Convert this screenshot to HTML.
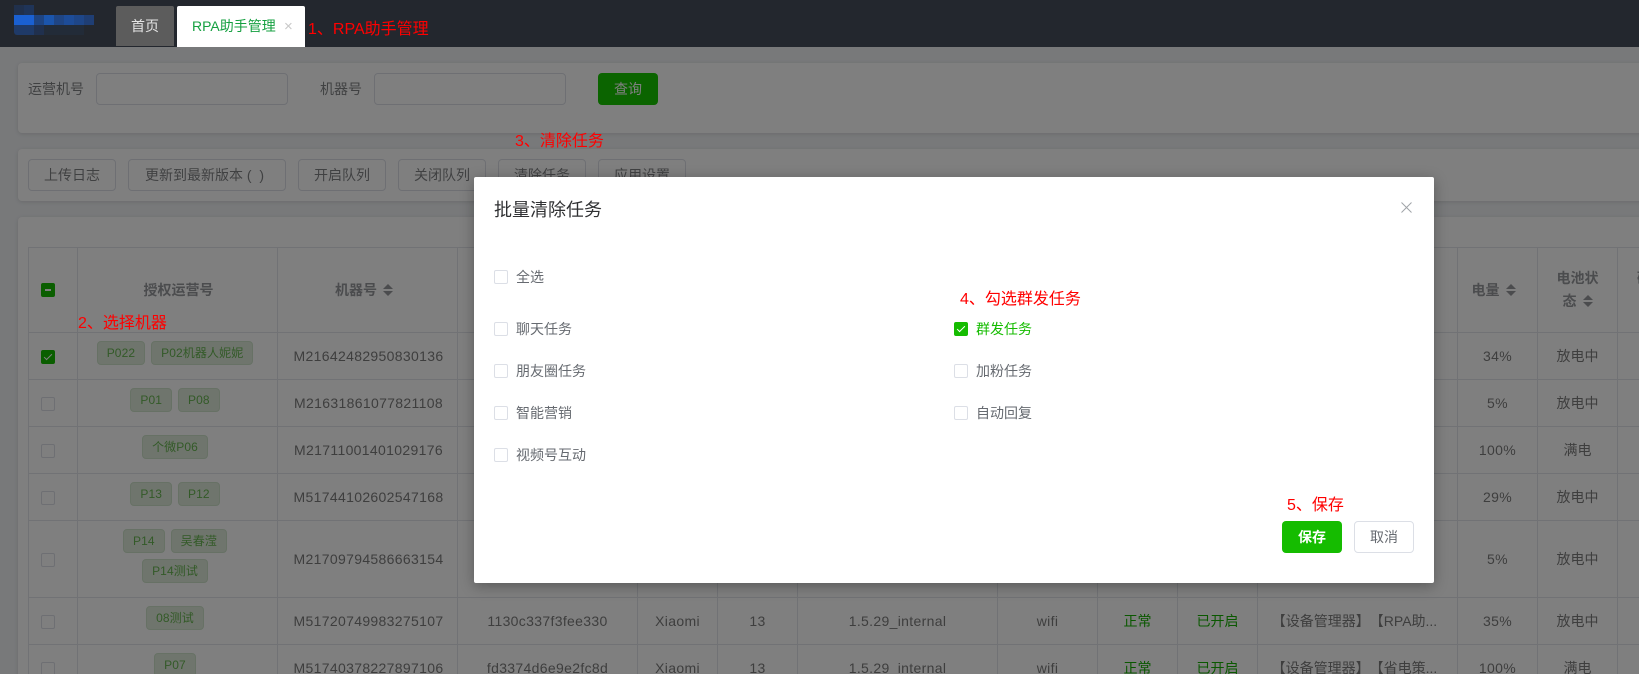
<!DOCTYPE html>
<html lang="zh-CN"><head><meta charset="utf-8"><title>RPA助手管理</title>
<style>
*{box-sizing:border-box}
html,body{margin:0;padding:0;width:1639px;height:674px;overflow:hidden;background:#f0f2f5}
#w{position:absolute;left:0;top:0;width:1639px;height:674px;overflow:hidden;background:#f0f2f5;font-family:"Liberation Sans","Noto Sans CJK SC",sans-serif;font-size:14px;color:#808285;text-spacing-trim:space-all}
.a{position:absolute;white-space:nowrap}
.hd{position:absolute;left:0;top:0;width:1639px;height:47px;background:#23272e;z-index:5}
.px{position:absolute}
.tab{position:absolute;top:6px;height:40px;line-height:41px;border-radius:2px 2px 0 0;text-align:center}
.card{position:absolute;left:18px;width:1640px;background:#fff;border-radius:4px;box-shadow:0 1px 4px rgba(0,0,0,.12)}
.inp{position:absolute;top:73px;width:192px;height:32px;border:1px solid #dcdfe6;border-radius:4px;background:#fff}
.btn{position:absolute;top:159px;height:32px;line-height:30px;border:1px solid #dcdfe6;border-radius:4px;background:#fff;text-align:center;color:#808285}
table{position:absolute;left:28px;top:247px;border-collapse:collapse;table-layout:fixed;width:1691px}
td,th{border:1px solid #e2e4ea;text-align:center;padding:0;vertical-align:middle;font-weight:400}
th{font-weight:700;color:#96989c;line-height:23px}
.n{letter-spacing:.33px;color:#7c7c7c}
.z{color:#7c7c7c}
.m{padding-left:2px}
.c{padding-right:11px}
.tc{padding-right:5px}
.tg{display:inline-block;height:24px;line-height:22px;padding:0 9px;margin:0 3px;font-size:12px;border:1px solid #cfe2ca;background:#dfeada;color:#66b550;border-radius:4px;letter-spacing:.1px}
.tl{position:relative;top:-3px;line-height:0}
.tl .tg{vertical-align:top}
.g{color:#15b000}
.cb{display:inline-block;width:14px;height:14px;border:1px solid #dcdfe6;border-radius:2px;background:#fff;vertical-align:middle;position:relative}
.cb.on{background:#15bc00;border-color:#15bc00}
.cb.on:after{content:"";position:absolute;left:4px;top:1px;width:3px;height:7px;border:1px solid #fff;border-left:0;border-top:0;transform:rotate(45deg)}
.cb.ind{background:#15bc00;border-color:#15bc00}
.cb.ind:after{content:"";position:absolute;left:3px;top:5px;width:6px;height:2px;background:#fff}
.s{display:inline-block;width:10px;height:12px;margin-left:6px;vertical-align:-1px;position:relative}
.s:before,.s:after{content:"";position:absolute;left:0;border:5px solid transparent}
.s:before{top:-5px;border-bottom-color:#96989c}
.s:after{top:7px;border-top-color:#96989c}
.ov{position:absolute;left:0;top:47px;width:1639px;height:627px;background:rgba(0,0,0,.5);z-index:6}
.md{position:absolute;left:474px;top:177px;width:960px;height:406px;background:#fff;border-radius:2px;box-shadow:0 3px 14px rgba(0,0,0,.3);z-index:7}
.lb{position:absolute;height:20px;line-height:20px;white-space:nowrap;color:#666a70}
.lb .cb{position:absolute;left:0;top:3px}
.lb span.t{position:absolute;left:22px;top:0}
.rd{position:absolute;color:#f00;font-size:16px;line-height:20px;white-space:nowrap;z-index:9}
</style></head><body>
<div id="w">

<div class="card" style="top:63px;height:70px"></div>
<div class="a" style="left:28px;top:79px;line-height:20px;color:#808285">运营机号</div>
<div class="inp" style="left:96px"></div>
<div class="a" style="left:320px;top:79px;line-height:20px;color:#808285">机器号</div>
<div class="inp" style="left:374px"></div>
<div class="a" style="left:598px;top:73px;width:60px;height:32px;line-height:32px;text-align:center;background:#16c800;border-radius:4px;color:#fff">查询</div>

<div class="card" style="top:149px;height:52px"></div>
<div class="btn" style="left:28px;width:88px">上传日志</div>
<div class="btn" style="left:128px;width:158px;padding-right:5px">更新到最新版本&nbsp;(&nbsp;&nbsp;)</div>
<div class="btn" style="left:298px;width:88px">开启队列</div>
<div class="btn" style="left:398px;width:88px">关闭队列</div>
<div class="btn" style="left:498px;width:88px">清除任务</div>
<div class="btn" style="left:598px;width:88px">应用设置</div>

<div class="card" style="top:217px;height:470px"></div>
<table>
<colgroup><col style="width:49px"><col style="width:200px"><col style="width:180px"><col style="width:180px"><col style="width:80px"><col style="width:80px"><col style="width:200px"><col style="width:100px"><col style="width:80px"><col style="width:80px"><col style="width:200px"><col style="width:80px"><col style="width:80px"><col style="width:102px"></colgroup>
<tr style="height:85px"><th class="c"><span class="cb ind" style="top:-1px"></span></th><th style="padding-left:2px">授权运营号</th><th style="padding-right:7px">机器号<i class="s"></i></th><th></th><th></th><th></th><th></th><th></th><th></th><th></th><th></th><th style="padding-right:8px">电量<i class="s"></i></th><th>电池状<br>态<i class="s"></i></th><th></th></tr>
<tr style="height:47px"><td class="c"><span class="cb on"></span></td><td class="tc"><div class="tl"><span class="tg">P022</span><span class="tg">P02机器人妮妮</span></div></td><td class="n m">M21642482950830136</td><td></td><td></td><td></td><td></td><td></td><td></td><td></td><td></td><td class="n">34%</td><td class="z">放电中</td><td></td></tr>
<tr style="height:47px"><td class="c"><span class="cb"></span></td><td class="tc"><div class="tl"><span class="tg">P01</span><span class="tg">P08</span></div></td><td class="n m">M21631861077821108</td><td></td><td></td><td></td><td></td><td></td><td></td><td></td><td></td><td class="n">5%</td><td class="z">放电中</td><td></td></tr>
<tr style="height:47px"><td class="c"><span class="cb"></span></td><td class="tc"><div class="tl"><span class="tg">个微P06</span></div></td><td class="n m">M21711001401029176</td><td></td><td></td><td></td><td></td><td></td><td></td><td></td><td></td><td class="n">100%</td><td class="z">满电</td><td></td></tr>
<tr style="height:47px"><td class="c"><span class="cb"></span></td><td class="tc"><div class="tl"><span class="tg">P13</span><span class="tg">P12</span></div></td><td class="n m">M51744102602547168</td><td></td><td></td><td></td><td></td><td></td><td></td><td></td><td></td><td class="n">29%</td><td class="z">放电中</td><td></td></tr>
<tr style="height:77px"><td class="c"><span class="cb"></span></td><td class="tc"><div class="tl"><span class="tg">P14</span><span class="tg">吴春滢</span><br><span class="tg" style="margin-top:6px">P14测试</span></div></td><td class="n m">M21709794586663154</td><td></td><td></td><td></td><td></td><td></td><td></td><td></td><td></td><td class="n">5%</td><td class="z">放电中</td><td></td></tr>
<tr style="height:47px"><td class="c"><span class="cb"></span></td><td class="tc"><div class="tl"><span class="tg">08测试</span></div></td><td class="n m">M51720749983275107</td><td class="n">1130c337f3fee330</td><td class="n">Xiaomi</td><td class="n">13</td><td class="n">1.5.29_internal</td><td class="n">wifi</td><td class="g">正常</td><td class="g">已开启</td><td class="z" style="padding-right:6px">【设备管理器】【RPA助...</td><td class="n">35%</td><td class="z">放电中</td><td></td></tr>
<tr style="height:47px"><td class="c"><span class="cb"></span></td><td class="tc"><div class="tl"><span class="tg">P07</span></div></td><td class="n m">M51740378227897106</td><td class="n">fd3374d6e9e2fc8d</td><td class="n">Xiaomi</td><td class="n">13</td><td class="n">1.5.29_internal</td><td class="n">wifi</td><td class="g">正常</td><td class="g">已开启</td><td class="z" style="padding-right:6px">【设备管理器】【省电策...</td><td class="n">100%</td><td class="z">满电</td><td></td></tr>
</table>
<div class="a" style="left:1637px;top:268px;font-weight:700;color:#96989c;line-height:20px">硬</div>

<div class="ov"></div>

<div class="hd">
<div class="px" style="left:14px;top:5px;width:10px;height:10px;background:#20304c"></div>
<div class="px" style="left:24px;top:5px;width:10px;height:10px;background:#1f3458"></div>
<div class="px" style="left:14px;top:15px;width:20px;height:10px;background:#1a60d2"></div>
<div class="px" style="left:34px;top:15px;width:10px;height:10px;background:#1e4482"></div>
<div class="px" style="left:44px;top:15px;width:10px;height:10px;background:#1b55ac"></div>
<div class="px" style="left:54px;top:15px;width:10px;height:10px;background:#1f4584"></div>
<div class="px" style="left:64px;top:15px;width:10px;height:10px;background:#1d4c98"></div>
<div class="px" style="left:74px;top:15px;width:10px;height:10px;background:#1e4688"></div>
<div class="px" style="left:84px;top:15px;width:10px;height:10px;background:#1f3e74"></div>
<div class="px" style="left:14px;top:25px;width:20px;height:10px;background:#1f3a68;border-radius:0 0 0 3px"></div>
<div class="px" style="left:34px;top:25px;width:10px;height:10px;background:#20304e"></div>
<div class="px" style="left:44px;top:25px;width:40px;height:10px;background:#222b38"></div>
<div class="tab" style="left:116px;width:58px;background:#5c5c5c;color:#e4e4e4">首页</div>
<div class="tab" style="left:177px;width:128px;height:41px;background:#fff;color:#15a040;text-align:left;padding-left:15px">RPA助手管理<span style="position:absolute;left:107px;top:0;color:#c8c8c8;font-size:15px">×</span></div>
</div>

<div class="rd" style="left:308px;top:20px">1、RPA助手管理</div>
<div class="rd" style="left:515px;top:132px">3、清除任务</div>
<div class="rd" style="left:78px;top:314px">2、选择机器</div>

<div class="md">
<div class="a" style="left:20px;top:21px;font-size:18px;line-height:24px;color:#303133">批量清除任务</div>
<svg class="a" style="left:927px;top:25px" width="11" height="11" viewBox="0 0 11 11"><path d="M.5.5l10 10M10.500.5l-10 10" stroke="#a0a3a8" stroke-width="1" fill="none"/></svg>
<div class="lb" style="left:20px;top:90px"><i class="cb"></i><span class="t">全选</span></div>
<div class="lb" style="left:20px;top:142px"><i class="cb"></i><span class="t">聊天任务</span></div>
<div class="lb" style="left:20px;top:184px"><i class="cb"></i><span class="t">朋友圈任务</span></div>
<div class="lb" style="left:20px;top:226px"><i class="cb"></i><span class="t">智能营销</span></div>
<div class="lb" style="left:20px;top:268px"><i class="cb"></i><span class="t">视频号互动</span></div>
<div class="lb" style="left:480px;top:142px;color:#15bc00"><i class="cb on"></i><span class="t">群发任务</span></div>
<div class="lb" style="left:480px;top:184px"><i class="cb"></i><span class="t">加粉任务</span></div>
<div class="lb" style="left:480px;top:226px"><i class="cb"></i><span class="t">自动回复</span></div>
<div class="a" style="left:808px;top:344px;width:60px;height:32px;line-height:32px;text-align:center;background:#15bc00;border-radius:4px;color:#fff;font-weight:700">保存</div>
<div class="a" style="left:880px;top:344px;width:60px;height:32px;line-height:30px;text-align:center;background:#fff;border:1px solid #dcdfe6;border-radius:4px;color:#666a70">取消</div>
</div>

<div class="rd" style="left:960px;top:290px">4、勾选群发任务</div>
<div class="rd" style="left:1287px;top:496px">5、保存</div>
</div>
</body></html>
